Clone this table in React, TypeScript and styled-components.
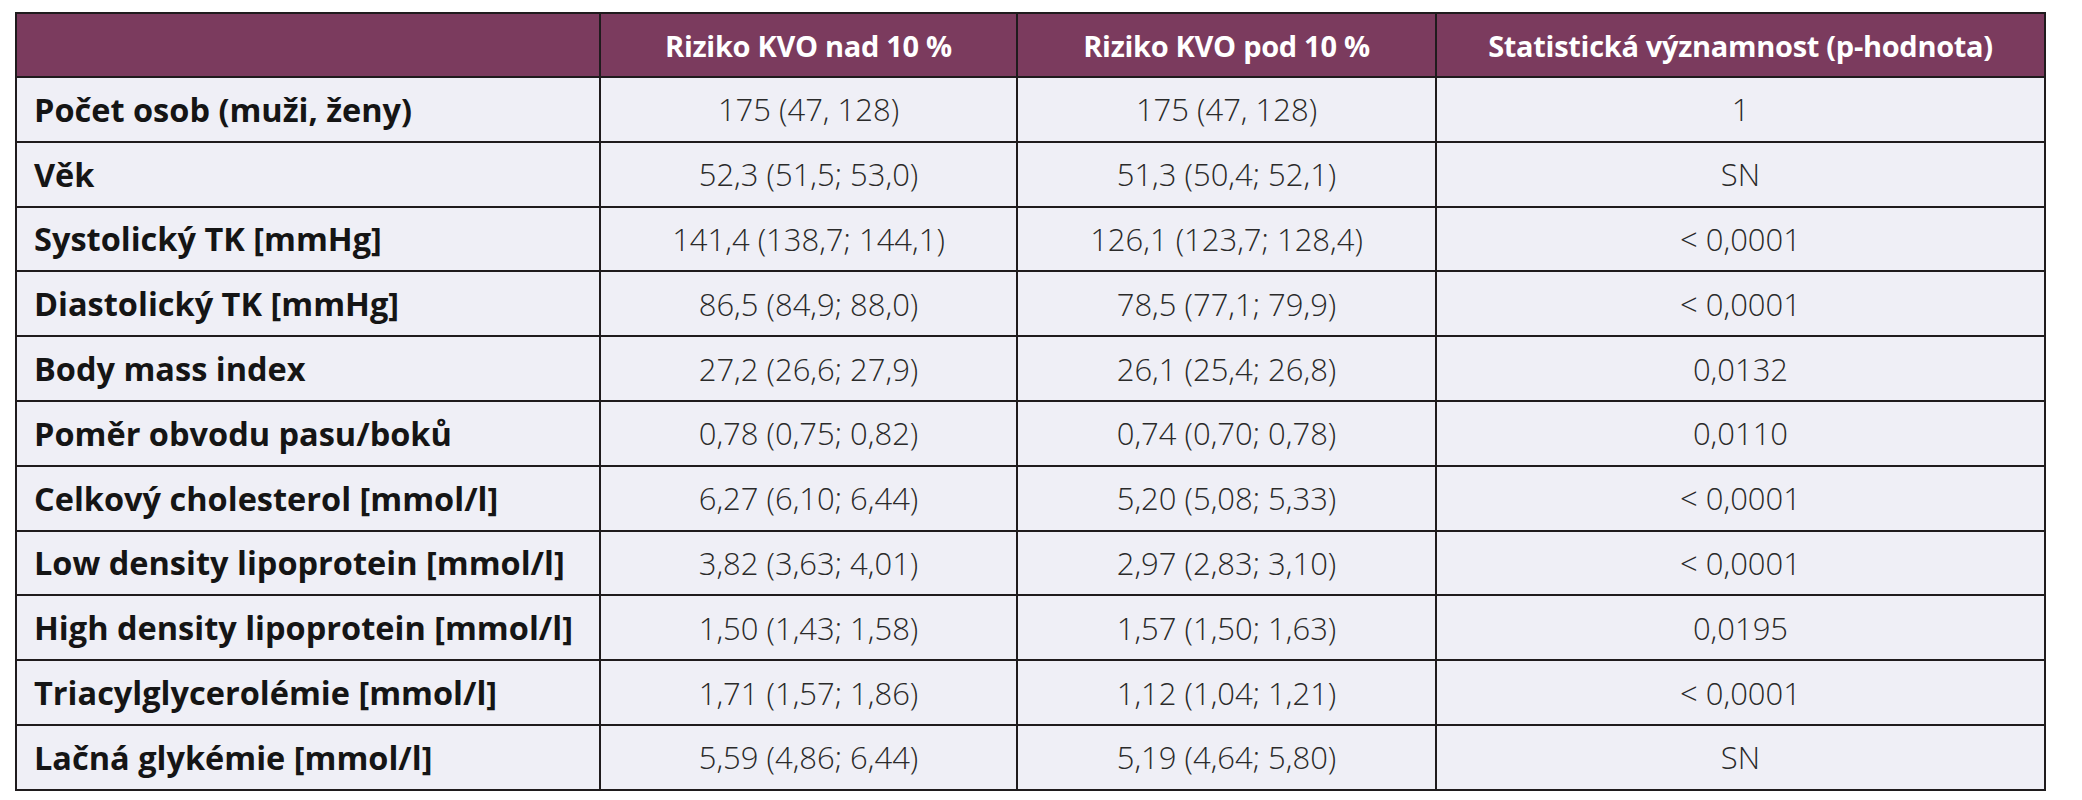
import styled, { createGlobalStyle } from 'styled-components';

const GlobalStyle = createGlobalStyle`
  html, body {
    margin: 0;
    padding: 0;
    background: #ffffff;
  }
  body {
    font-family: 'Open Sans', 'Liberation Sans', sans-serif;
  }
`;

type Row = {
  label: string;
  high: string;
  low: string;
  p: string;
};

const rows: Row[] = [
  { label: 'Počet osob (muži, ženy)', high: '175 (47, 128)', low: '175 (47, 128)', p: '1' },
  { label: 'Věk', high: '52,3 (51,5; 53,0)', low: '51,3 (50,4; 52,1)', p: 'SN' },
  { label: 'Systolický TK [mmHg]', high: '141,4 (138,7; 144,1)', low: '126,1 (123,7; 128,4)', p: '< 0,0001' },
  { label: 'Diastolický TK [mmHg]', high: '86,5 (84,9; 88,0)', low: '78,5 (77,1; 79,9)', p: '< 0,0001' },
  { label: 'Body mass index', high: '27,2 (26,6; 27,9)', low: '26,1 (25,4; 26,8)', p: '0,0132' },
  { label: 'Poměr obvodu pasu/boků', high: '0,78 (0,75; 0,82)', low: '0,74 (0,70; 0,78)', p: '0,0110' },
  { label: 'Celkový cholesterol [mmol/l]', high: '6,27 (6,10; 6,44)', low: '5,20 (5,08; 5,33)', p: '< 0,0001' },
  { label: 'Low density lipoprotein [mmol/l]', high: '3,82 (3,63; 4,01)', low: '2,97 (2,83; 3,10)', p: '< 0,0001' },
  { label: 'High density lipoprotein [mmol/l]', high: '1,50 (1,43; 1,58)', low: '1,57 (1,50; 1,63)', p: '0,0195' },
  { label: 'Triacylglycerolémie [mmol/l]', high: '1,71 (1,57; 1,86)', low: '1,12 (1,04; 1,21)', p: '< 0,0001' },
  { label: 'Lačná glykémie [mmol/l]', high: '5,59 (4,86; 6,44)', low: '5,19 (4,64; 5,80)', p: 'SN' },
];

export default function App() {
  return (
    <>
      <GlobalStyle />
      <Page>
        <Table>
          <colgroup>
            <col style={{ width: 584 }} />
            <col style={{ width: 417 }} />
            <col style={{ width: 419 }} />
            <col style={{ width: 609 }} />
          </colgroup>
          <thead>
            <HeadRow>
              <HeadCell />
              <HeadCell>Riziko KVO nad 10 %</HeadCell>
              <HeadCell>Riziko KVO pod 10 %</HeadCell>
              <HeadCell>Statistická významnost (p-hodnota)</HeadCell>
            </HeadRow>
          </thead>
          <tbody>
            {rows.map((r) => (
              <BodyRow key={r.label}>
                <LabelCell>{r.label}</LabelCell>
                <ValueCell>{r.high}</ValueCell>
                <ValueCell>{r.low}</ValueCell>
                <ValueCell>{r.p}</ValueCell>
              </BodyRow>
            ))}
          </tbody>
        </Table>
      </Page>
    </>
  );
}

const Page = styled.div`
  padding: 12px 0 0 15px;
`;

const Table = styled.table`
  border-collapse: collapse;
  table-layout: fixed;
  width: 2029px;
  background: #efeff6;
  border: 2px solid #1f1b1d;
`;

const HeadRow = styled.tr`
  height: 64px;
  background: #7b3b5e;
`;

const HeadCell = styled.th`
  border: 2px solid #1f1b1d;
  color: #ffffff;
  font-family: 'Open Sans', 'Liberation Sans', sans-serif;
  font-size: 29px;
  font-weight: 700;
  letter-spacing: -0.3px;
  text-align: center;
  padding: 0 10px;
  white-space: nowrap;
`;

const BodyRow = styled.tr`
  height: 64.8px;
`;

const LabelCell = styled.td`
  border: 2px solid #1f1b1d;
  color: #151515;
  font-size: 32.5px;
  font-weight: 700;
  padding: 0 0 0 17px;
  white-space: nowrap;
`;

const ValueCell = styled.td`
  border: 2px solid #1f1b1d;
  color: #2a2a2a;
  font-size: 31px;
  font-weight: 300;
  text-align: center;
  white-space: nowrap;
`;
